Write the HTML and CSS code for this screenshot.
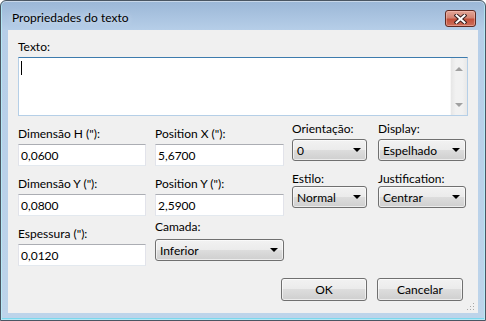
FILE: index.html
```html
<!DOCTYPE html>
<html lang="pt">
<head>
    <meta charset="UTF-8">
    <title>Propriedades do texto</title>
    <link rel="stylesheet" href="styles.css">
</head>
<body>
    <div class="window">
        <div class="titlebar">
            <span class="title">Propriedades do texto</span>
            <button class="close" title="Fechar">
                <svg width="13" height="10" viewBox="0 0 13 10">
                    <path d="M2.5 1.5 L10.5 8.5 M10.5 1.5 L2.5 8.5" stroke="#3a2020" stroke-width="4" stroke-linecap="square"/>
                    <path d="M2.5 1.5 L10.5 8.5 M10.5 1.5 L2.5 8.5" stroke="#ffffff" stroke-width="2" stroke-linecap="square"/>
                </svg>
            </button>
        </div>

        <div class="client">
            <div class="lbl">Texto:</div>
            <div class="memo">
                <div class="memo-text"><span class="caret"></span></div>
                <div class="vscroll">
                    <span class="arrow-up"></span>
                    <span class="arrow-down"></span>
                </div>
            </div>

            <div class="fields">
                <div class="col col-size">
                    <div class="field">
                        <div class="lbl">Dimensão H ("):</div>
                        <input class="edit" type="text" value="0,0600">
                    </div>
                    <div class="field">
                        <div class="lbl">Dimensão Y ("):</div>
                        <input class="edit" type="text" value="0,0800">
                    </div>
                    <div class="field">
                        <div class="lbl">Espessura ("):</div>
                        <input class="edit" type="text" value="0,0120">
                    </div>
                </div>

                <div class="col col-pos">
                    <div class="field">
                        <div class="lbl">Position X ("):</div>
                        <input class="edit" type="text" value="5,6700">
                    </div>
                    <div class="field">
                        <div class="lbl">Position Y ("):</div>
                        <input class="edit" type="text" value="2,5900">
                    </div>
                    <div class="field field-layer">
                        <div class="lbl">Camada:</div>
                        <div class="combo"><span>Inferior</span><i class="drop"></i></div>
                    </div>
                </div>

                <div class="col col-small">
                    <div class="field">
                        <div class="lbl">Orientação:</div>
                        <div class="combo"><span>0</span><i class="drop"></i></div>
                    </div>
                    <div class="field">
                        <div class="lbl">Estilo:</div>
                        <div class="combo"><span>Normal</span><i class="drop"></i></div>
                    </div>
                </div>

                <div class="col col-wide">
                    <div class="field">
                        <div class="lbl">Display:</div>
                        <div class="combo"><span>Espelhado</span><i class="drop"></i></div>
                    </div>
                    <div class="field">
                        <div class="lbl">Justification:</div>
                        <div class="combo"><span>Centrar</span><i class="drop"></i></div>
                    </div>
                </div>
            </div>

            <div class="actions">
                <button class="btn">OK</button>
                <button class="btn">Cancelar</button>
            </div>

            <svg class="grip" width="8" height="8" viewBox="0 0 8 8">
                <rect x="6" y="0" width="1" height="1" fill="#a8a8a8"/>
                <rect x="3" y="3" width="1" height="1" fill="#a8a8a8"/>
                <rect x="6" y="3" width="1" height="1" fill="#a8a8a8"/>
                <rect x="0" y="6" width="1" height="1" fill="#a8a8a8"/>
                <rect x="3" y="6" width="1" height="1" fill="#a8a8a8"/>
                <rect x="6" y="6" width="1" height="1" fill="#a8a8a8"/>
            </svg>
        </div>
    </div>
</body>
</html>
```

FILE: styles.css
```css
body {
    margin: 0;
    font-family: Lato, 'Noto Sans', Arial, sans-serif;
    font-size: 12px;
    color: #000;
    background-color: #ffffff;
}
.window {
    width: 486px;
    height: 321px;
    box-sizing: border-box;
    display: flex;
    flex-direction: column;
    padding: 0 7px 7px;
    border: 1px solid #4a5663;
    border-radius: 6px 6px 0 0;
    background: linear-gradient(#9bb7d7 0px, #b6cee8 29px, #bdd4ea 100%);
    box-shadow: inset 0 0 0 1px rgba(255, 255, 255, 0.45), inset 0 -1px 0 1px rgba(60, 220, 240, 0.5);
}
.titlebar {
    height: 29px;
    display: flex;
    align-items: flex-start;
}
.title {
    margin: 9px 0 0 4px;
    line-height: 16px;
    text-shadow: 0 0 6px rgba(255, 255, 255, 0.7);
}
.close {
    margin: 9px 2px 0 auto;
    width: 31px;
    height: 17px;
    padding: 0;
    display: flex;
    align-items: center;
    justify-content: center;
    border: 1px solid #5e2a22;
    border-radius: 3px;
    background: linear-gradient(#e3a697 0%, #d28473 45%, #c3503a 55%, #cd6f5b 100%);
    box-shadow: inset 0 0 0 1px rgba(255, 200, 190, 0.45);
}
.client {
    position: relative;
    height: 283px;
    box-sizing: border-box;
    display: flex;
    flex-direction: column;
    padding: 9px 10px 12px;
    background-color: #f0f0f0;
}
.lbl {
    line-height: 16px;
    height: 16px;
    white-space: nowrap;
}
.memo {
    margin-top: 2px;
    height: 59px;
    box-sizing: border-box;
    display: flex;
    background-color: #fff;
    border: 1px solid #b5cfe7;
    border-top-color: #3d7bad;
}
.memo-text {
    flex: 1;
    padding: 3px 2px;
}
.caret {
    display: block;
    width: 1px;
    height: 14px;
    background-color: #000;
}
.vscroll {
    width: 17px;
    display: flex;
    flex-direction: column;
    justify-content: space-between;
    align-items: center;
    padding: 9px 0 8px;
    box-sizing: border-box;
    background: linear-gradient(90deg, #e6e6e6, #f1f1f1 30%, #f1f1f1 70%, #e8e8e8);
    border-left: 1px solid #f8f8f8;
}
.arrow-up, .arrow-down {
    width: 0;
    height: 0;
    border-left: 4px solid transparent;
    border-right: 4px solid transparent;
}
.arrow-up {
    border-bottom: 4px solid #a0a0a0;
}
.arrow-down {
    border-top: 4px solid #a0a0a0;
}
.fields {
    display: grid;
    grid-template-columns: 128px 129px 76px 88px;
    column-gap: 9px;
    align-items: start;
}
.col-small {
    margin-left: -1px;
    margin-right: 2px;
}
.col {
    display: flex;
    flex-direction: column;
}
.col-size .field, .col-pos .field {
    margin-top: 10px;
}
.col-pos .field-layer {
    margin-top: 3px;
}
.col-pos .field-layer .lbl {
    margin-bottom: 4px;
}
.col-small .field, .col-wide .field {
    margin-top: 5px;
}
.col-small .field + .field, .col-wide .field + .field {
    margin-top: 10px;
}
.field .lbl {
    margin-bottom: 2px;
}
.col-small .field + .field .lbl, .col-wide .field + .field .lbl {
    margin-bottom: -1px;
}
.edit {
    display: block;
    width: 100%;
    height: 22px;
    box-sizing: border-box;
    margin: 0;
    padding: 0 2px;
    font-family: inherit;
    font-size: 12px;
    color: #000;
    background-color: #fff;
    border: 1px solid #e2e3ea;
    border-top-color: #abadb3;
    border-bottom-color: #e3e9ef;
    outline: none;
}
.combo {
    height: 22px;
    box-sizing: border-box;
    display: flex;
    align-items: center;
    justify-content: space-between;
    padding: 0 5px 0 4px;
    border: 1px solid #707070;
    border-radius: 3px;
    background: linear-gradient(#f2f2f2 0%, #ebebeb 50%, #dddddd 50%, #cfcfcf 100%);
    box-shadow: inset 0 0 0 1px rgba(255, 255, 255, 0.6);
}
.drop {
    width: 0;
    height: 0;
    border-left: 4px solid transparent;
    border-right: 4px solid transparent;
    border-top: 4px solid #000;
}
.actions {
    margin-top: auto;
    display: flex;
    justify-content: flex-end;
    gap: 10px;
    padding-right: 5px;
}
.btn {
    width: 86px;
    height: 23px;
    padding: 0;
    font-family: inherit;
    font-size: 12px;
    color: #000;
    border: 1px solid #707070;
    border-radius: 3px;
    background: linear-gradient(#f2f2f2 0%, #ebebeb 50%, #dddddd 50%, #cfcfcf 100%);
    box-shadow: inset 0 0 0 1px rgba(255, 255, 255, 0.6);
}
.grip {
    position: absolute;
    right: 3px;
    bottom: 2px;
}
```
